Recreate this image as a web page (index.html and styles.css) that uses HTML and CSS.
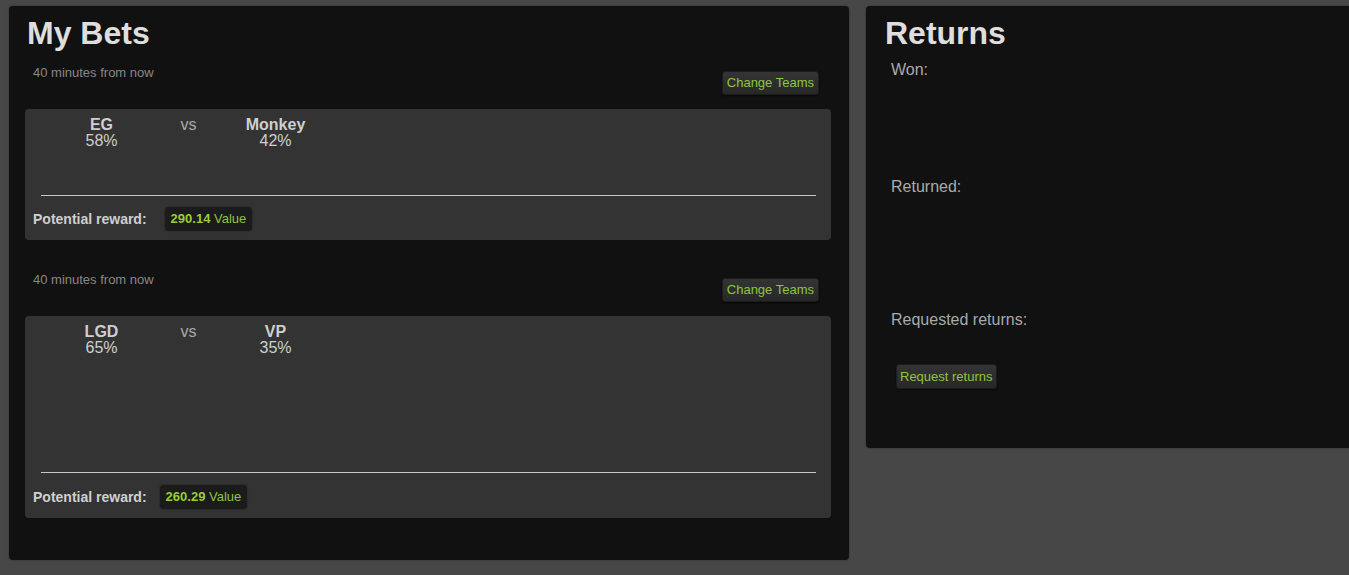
FILE: index.html
```html
<!DOCTYPE html>
<html>
<head>
<meta charset="utf-8">
<title>My Bets</title>
<link rel="stylesheet" href="styles.css">
</head>
<body>
<div class="page">
  <section class="panel bets-panel">
    <h1 class="panel-title">My Bets</h1>

    <div class="bet">
      <div class="bet-head">
        <span class="time">40 minutes from now</span>
        <button class="btn change-btn">Change Teams</button>
      </div>
      <div class="card">
        <div class="teams">
          <div class="team"><div class="team-name">EG</div><div class="team-pct">58%</div></div>
          <div class="vs">vs</div>
          <div class="team"><div class="team-name">Monkey</div><div class="team-pct">42%</div></div>
        </div>
        <div class="divider"></div>
        <div class="reward-row">
          <span class="reward-label">Potential reward:</span>
          <span class="badge"><b>290.14</b> Value</span>
        </div>
      </div>
    </div>

    <div class="bet bet-next">
      <div class="bet-head">
        <span class="time">40 minutes from now</span>
        <button class="btn change-btn">Change Teams</button>
      </div>
      <div class="card">
        <div class="teams teams-tall">
          <div class="team"><div class="team-name">LGD</div><div class="team-pct">65%</div></div>
          <div class="vs">vs</div>
          <div class="team"><div class="team-name">VP</div><div class="team-pct">35%</div></div>
        </div>
        <div class="divider"></div>
        <div class="reward-row reward-compact">
          <span class="reward-label">Potential reward:</span>
          <span class="badge"><b>260.29</b> Value</span>
        </div>
      </div>
    </div>
  </section>

  <section class="panel returns-panel">
    <h1 class="panel-title">Returns</h1>
    <div class="ret-section ret-won"><div class="ret-label">Won:</div></div>
    <div class="ret-section ret-returned"><div class="ret-label">Returned:</div></div>
    <div class="ret-section ret-requested">
      <div class="ret-label">Requested returns:</div>
      <button class="btn request-btn">Request returns</button>
    </div>
  </section>
</div>
</body>
</html>
```

FILE: styles.css
```css
html, body {
  margin: 0;
  padding: 0;
  overflow: hidden;
}
body {
  background: #474747;
  font-family: "Liberation Sans", Arial, sans-serif;
  color: #ccc;
  height: 575px;
}
.page {
  display: flex;
  align-items: flex-start;
  padding: 6px 0 0 9px;
}
.panel {
  background: #111111;
  border-radius: 4px;
  box-shadow: 0 0 2px rgba(0,0,0,0.4);
  box-sizing: border-box;
  flex: none;
}
.bets-panel {
  width: 840px;
  padding: 9px 18px 42px 16px;
}
.returns-panel {
  width: 483px;
  margin-left: 17px;
  padding: 9px 18px 59px 17px;
  border-top-right-radius: 0;
  border-bottom-right-radius: 0;
}
.panel-title {
  margin: 0;
  padding-left: 2px;
  font-size: 32px;
  line-height: 36px;
  font-weight: bold;
  color: #dedede;
}
.bet-head {
  display: flex;
  justify-content: space-between;
  align-items: flex-start;
  padding: 12px 12px 0 8px;
}
.time {
  font-size: 13px;
  line-height: 19px;
  color: #888;
}
.btn {
  font-family: "Liberation Sans", Arial, sans-serif;
  font-size: 13px;
  color: #8dc63f;
  background: linear-gradient(#343434, #272727);
  border: 1px solid #1c1c1c;
  border-radius: 3px;
  padding: 0 4px;
  box-shadow: 0 1px 2px rgba(0,0,0,0.6);
  white-space: nowrap;
  cursor: pointer;
}
.change-btn {
  margin-top: 8px;
  height: 24px;
  line-height: 22px;
}
.card {
  margin-top: 14px;
  background: #333333;
  border-radius: 4px;
  padding: 8px 15px 9px 8px;
}
.teams {
  display: grid;
  grid-template-columns: 87px 87px 87px;
  margin-left: 25px;
  min-height: 78px;
  align-content: start;
  font-size: 16px;
  line-height: 16px;
}
.teams-tall {
  min-height: 148px;
}
.team {
  text-align: center;
}
.team-name {
  font-weight: bold;
  color: #cfcfcf;
}
.team-pct {
  color: #cfcfcf;
}
.vs {
  text-align: center;
  color: #aaa;
}
.divider {
  height: 1px;
  background: #c8c8c8;
  margin-left: 8px;
}
.reward-row {
  display: flex;
  align-items: center;
  margin-top: 11px;
  height: 24px;
}
.reward-compact {
  margin-top: 12px;
}
.reward-label {
  font-size: 14px;
  font-weight: bold;
  line-height: 24px;
  color: #cfcfcf;
}
.badge {
  margin-left: 18px;
  background: #1b1b1b;
  border-radius: 4px;
  padding: 0 6px;
  line-height: 24px;
  font-size: 13px;
  color: #8dc63f;
  box-shadow: 0 0 2px rgba(0,0,0,0.5);
  white-space: nowrap;
}
.badge b {
  color: #9acd32;
}
.reward-compact .badge {
  margin-left: 13px;
}
.bet-next {
  margin-top: 18px;
}
.ret-section {
  box-sizing: border-box;
}
.ret-label {
  margin-left: 8px;
  font-size: 16px;
  line-height: 20px;
  color: #aaa;
}
.ret-won {
  padding-top: 9px;
  height: 126px;
}
.ret-returned {
  height: 133px;
}
.request-btn {
  display: block;
  margin: 34px 0 0 13px;
  height: 25px;
  line-height: 23px;
  padding: 0 3px;
}
```
